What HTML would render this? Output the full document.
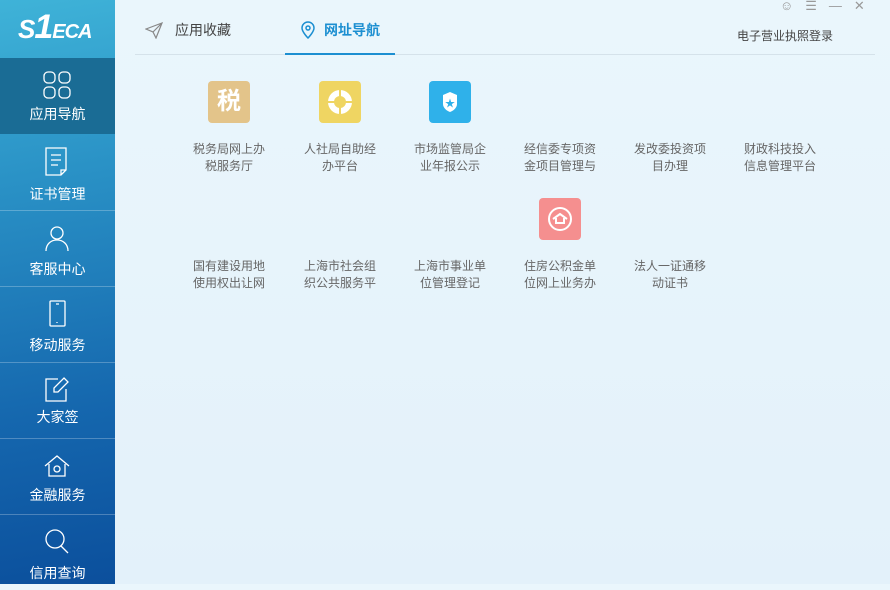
<!DOCTYPE html>
<html><head><meta charset="utf-8"><style>
*{margin:0;padding:0;box-sizing:border-box}
body{width:890px;height:584px;overflow:hidden;position:relative;font-family:"Liberation Sans","Noto Sans CJK SC",sans-serif;background:linear-gradient(180deg,#eaf6fc,#e3f1fa)}
#side{position:absolute;left:0;top:0;width:115px;height:584px;background:linear-gradient(170deg,#3fb3d8 0%,#2a92c6 30%,#1567ae 70%,#0b4f9c 100%)}
.logo{position:absolute;left:18px;top:8px;color:#fff;font:italic bold 26px "Liberation Sans",sans-serif;letter-spacing:-1px}
.item{position:absolute;left:0;width:115px;height:76px;border-top:1px solid rgba(255,255,255,.25);color:#fff;text-align:center;font-size:14px}
.item svg{position:absolute;left:42px;top:12px}
.item span{position:absolute;left:0;right:0;top:44px}
.act{background:#1a6c95;border-top:none}
.tab{position:absolute;top:20px;font-size:14px;color:#444}
.cell{position:absolute;width:110px;text-align:center;font-size:12px;line-height:17px;color:#666}
.ic{position:absolute;width:42px;height:42px;border-radius:4px}
</style></head><body>
<div id="side">
<div class="logo">S<span style="font-size:34px">1</span><span style="font-size:20px">ECA</span></div>
<div class="item act" style="top:58px"><svg width="30" height="30" viewBox="0 0 30 30" fill="none" stroke="#fff" stroke-width="1.3"><rect x="2" y="2" width="11" height="11" rx="4"/><rect x="17" y="2" width="11" height="11" rx="4"/><rect x="2" y="17" width="11" height="11" rx="4"/><rect x="17" y="17" width="11" height="11" rx="4"/></svg><span style="top:46px">应用导航</span></div>
<div class="item" style="top:134px;border-top:none"><svg width="30" height="32" viewBox="0 0 30 32" fill="none" stroke="#fff" stroke-width="1.3"><path d="M4 2h20v22l-5 5H4z M19 29v-5h5"/><path d="M9 9h10M9 14h10M9 19h7"/></svg><span style="top:50px">证书管理</span></div>
<div class="item" style="top:210px"><svg width="30" height="30" viewBox="0 0 30 30" fill="none" stroke="#fff" stroke-width="1.3"><circle cx="15" cy="10" r="6"/><path d="M4 28c0-7 5-11 11-11s11 4 11 11"/></svg><span style="top:48px">客服中心</span></div>
<div class="item" style="top:286px"><svg width="30" height="30" viewBox="0 0 30 30" fill="none" stroke="#fff" stroke-width="1.3"><rect x="8" y="2" width="15" height="25" rx="1"/><path d="M14 5h3M15 23v1"/></svg><span style="top:48px">移动服务</span></div>
<div class="item" style="top:362px"><svg width="30" height="30" viewBox="0 0 30 30" fill="none" stroke="#fff" stroke-width="1.3"><path d="M16 4H4v22h20V14"/><path d="M22 3l4 4-10 10h-4v-4z"/></svg><span style="top:44px">大家签</span></div>
<div class="item" style="top:438px"><svg width="30" height="30" viewBox="0 0 30 30" fill="none" stroke="#fff" stroke-width="1.3"><path d="M3 15L15 5l12 10M7 13v12h16V13"/><circle cx="15" cy="18" r="3"/></svg><span style="top:46px">金融服务</span></div>
<div class="item" style="top:514px"><svg width="30" height="30" viewBox="0 0 30 30" fill="none" stroke="#fff" stroke-width="1.3"><circle cx="13" cy="12" r="9"/><path d="M19 19l7 7"/></svg><span style="top:48px">信用查询</span></div>
</div>
<svg style="position:absolute;left:145px;top:21px" width="18" height="18" viewBox="0 0 18 18" fill="none" stroke="#888" stroke-width="1.2"><path d="M1 8l16-6-6 15-3-6z M8 11l9-9"/></svg>
<div class="tab" style="left:175px">应用收藏</div>
<svg style="position:absolute;left:300px;top:20px" width="16" height="19" viewBox="0 0 16 19" fill="none" stroke="#1c8fd1" stroke-width="1.5"><path d="M8 18s-6-6-6-10a6 6 0 0112 0c0 4-6 10-6 10z"/><circle cx="8" cy="8" r="2"/></svg>
<div class="tab" style="left:324px;color:#1c8fd1;font-weight:bold">网址导航</div>
<div style="position:absolute;left:135px;top:54px;width:740px;height:1px;background:#d5e2ea"></div>
<div style="position:absolute;left:285px;top:53px;width:110px;height:2px;background:#1c8fd1"></div>
<div style="position:absolute;left:737px;top:27px;font-size:12px;color:#444">电子营业执照登录</div>
<div style="position:absolute;left:780px;top:-2px;font-size:13px;color:#999;letter-spacing:12px">☺☰—✕</div>
<div class="ic" style="left:208px;top:81px;background:#e3c48a;color:#fff;font-size:24px;font-weight:bold;text-align:center;line-height:42px">税</div>
<div class="ic" style="left:319px;top:81px;background:#efd562"><svg width="42" height="42"><circle cx="21" cy="21" r="12" fill="#fff"/><circle cx="21" cy="21" r="6" fill="#efd562"/><path d="M9 21h24M21 9v24" stroke="#efd562" stroke-width="2"/></svg></div>
<div class="ic" style="left:429px;top:81px;background:#2fb1ea"><svg width="42" height="42"><path d="M14 14l7-3 7 3v9c0 4-4 7-7 8-3-1-7-4-7-8z" fill="#fff"/><text x="21" y="26" font-size="10" fill="#2fb1ea" text-anchor="middle">★</text></svg></div>
<div class="ic" style="left:539px;top:198px;background:#f58f8f"><svg width="42" height="42" fill="none" stroke="#fff" stroke-width="2"><circle cx="21" cy="21" r="11"/><path d="M14 21l7-5 7 5M17 20v5h8v-5"/></svg></div>
<div class="cell" style="left:174px;top:141px">税务局网上办<br>税服务厅</div>
<div class="cell" style="left:285px;top:141px">人社局自助经<br>办平台</div>
<div class="cell" style="left:395px;top:141px">市场监管局企<br>业年报公示</div>
<div class="cell" style="left:505px;top:141px">经信委专项资<br>金项目管理与</div>
<div class="cell" style="left:615px;top:141px">发改委投资项<br>目办理</div>
<div class="cell" style="left:725px;top:141px">财政科技投入<br>信息管理平台</div>
<div class="cell" style="left:174px;top:258px">国有建设用地<br>使用权出让网</div>
<div class="cell" style="left:285px;top:258px">上海市社会组<br>织公共服务平</div>
<div class="cell" style="left:395px;top:258px">上海市事业单<br>位管理登记</div>
<div class="cell" style="left:505px;top:258px">住房公积金单<br>位网上业务办</div>
<div class="cell" style="left:615px;top:258px">法人一证通移<br>动证书</div>
</body></html>
